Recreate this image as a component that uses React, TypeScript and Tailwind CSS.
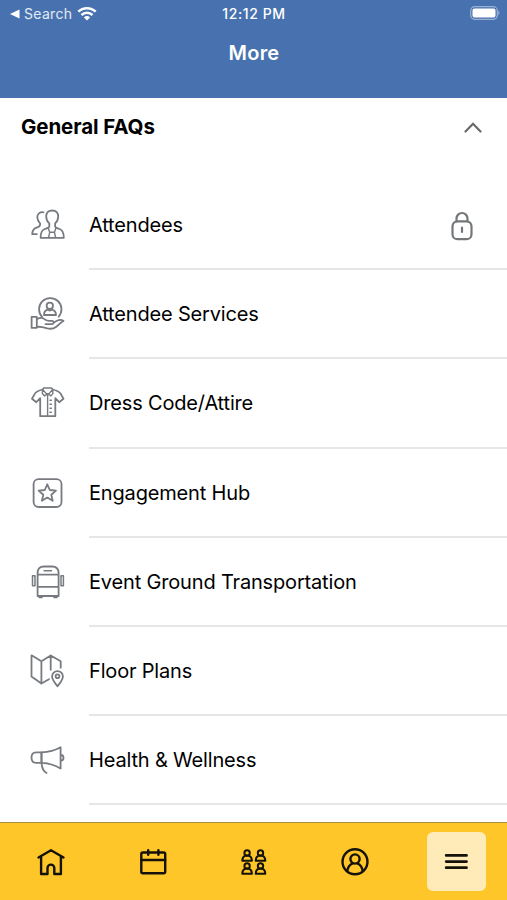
import type { ReactNode } from "react";

type IconProps = { children?: ReactNode };

const LineIcon = ({ children }: IconProps) => (
  <svg
    viewBox="0 0 34 34"
    className="-mt-px h-[34px] w-[34px] shrink-0 overflow-visible text-[#777b80]"
    fill="none"
    stroke="currentColor"
    strokeWidth="1.8"
    strokeLinecap="round"
    strokeLinejoin="round"
    aria-hidden
  >
    {children}
  </svg>
);

const AttendeesIcon = () => (
  <LineIcon>
    <path d="M13.5 4.3C9.8 3.8 7.2 6 7.3 9.2c.1 2.6 1.3 4.7 2.8 6.2.5 2.5-1 3.5-3.6 4.3-3.2 1.1-4.2 2.8-4.2 6.5h4.5" />
    <path d="M22.2 2.5c-3.9 0-6.2 2.5-6 6.2.2 3.4 1.8 5.6 3.1 6.7v3.2c-.5 1.2-2.4 1.7-4.5 2.4-3.2 1-4.2 3.2-4.2 8.8h23.2c0-5.6-1-7.8-4.2-8.8-2.1-.7-4-1.2-4.5-2.4v-3.2c1.3-1.1 2.9-3.3 3.1-6.7.2-3.7-2.1-6.2-6-6.2Z" />
    <path d="m18.3 20 1.400 4.300h4.800l1.400-4.300M19.700 24.300 18.600 29.500M24.500 24.300l1.100 5.200" strokeWidth="1.4" />
  </LineIcon>
);

const ServicesIcon = () => (
  <LineIcon>
    <path d="M12.2 20a11.2 11.2 0 1 1 16.5-.4" />
    <circle cx="19.8" cy="8.8" r="3.2" />
    <path d="M14 18c0-3 .8-4.5 3.3-5.4 1.5 1.1 3.500 1.100 5 0C25 13.500 26 15 26 18Z" />
    <path d="M1.600 19.800h5.200v11H1.600z" />
    <path d="M6.800 22.200c3.200-1.900 5.700-1.700 8 .2 1.400 1.200 3 1.500 5.200 1.400h2c2.300.1 2.300 3.200 0 3.300h-6.500M24.200 25.300l2.800-1.500c2.300-1.200 4.500-1.300 6.500.2-2.300 1-4 3.300-7.200 5.700-2.500 1.900-5.500 2.500-9 1.700l-5-1.300c-1.800-.4-3.500-.4-5.500-.3" />
  </LineIcon>
);

const AttireIcon = () => (
  <LineIcon>
    <path d="M12.600 3.500C7.500 4.800 6 5.500 4.900 7.600L2 12.700l4.300 3.500 3.900-4v18h15.100v-18l3.900 4 4.300-3.500-2.900-5.100c-1.200-2.100-2.700-2.800-7.900-4.100" />
    <path d="M12.600 3.500 13.700 2h8l1 1.500-5 5.600ZM12.600 3.500l-.3 4.100 2.200 2.300 3.200-2.200 3.200 2.200 2-2.300-.2-4.100M17.600 9v21" strokeWidth="1.4" />
    <path d="M20 14.300h1.400M20 18.300h1.400M20 22.300h1.400M20 26.200h1.400" strokeWidth="1.4" />
  </LineIcon>
);

const HubIcon = () => (
  <LineIcon>
    <rect x="3.6" y="3.1" width="27.9" height="27.9" rx="5" />
    <path d="m17.300 8.300 2.500 5.700 6.200.6-4.700 4.100 1.400 6.100-5.400-3.200-5.400 3.200 1.400-6.100-4.700-4.100 6.200-.6Z" />
  </LineIcon>
);

const BusIcon = () => (
  <LineIcon>
    <path d="M7.600 31V8.200c0-4.600 2.400-6.700 6.500-6.700h8c4.100 0 6.500 2.100 6.500 6.700V31ZM7.600 9.700h21M7.600 21.900h21" />
    <path d="M14 5.800h7.600" strokeWidth="1.4" />
    <path d="M9.300 32.200h2.600M24.200 32.200h2.600" strokeWidth="2" />
    <path d="M5 10.700H2.500v10H5ZM31 10.700h2.400v10H31Z" strokeWidth="1.5" />
  </LineIcon>
);

const FloorIcon = () => (
  <LineIcon>
    <path d="M19 25.200 11.400 29.500 1.500 22.500V1.300l9.900 5.900 9.300-5.700 10 5.700v6.500M11.400 7.200v22.300M20.700 1.500v14.300" />
    <path d="M27.500 32.300c-2.600-3.500-5.400-6.500-5.400-9.800a5.400 5.400 0 0 1 10.800 0c0 3.300-2.800 6.300-5.400 9.800Z" />
    <circle cx="27.5" cy="22.3" r="1.9" />
  </LineIcon>
);

const HealthIcon = () => (
  <LineIcon>
    <path d="M11.500 9.300H6.200c-3.200 0-4.700 1.700-4.700 5.200s1.500 5.400 4.700 5.400h5.300M11.500 9.300c7.500-.2 13-1.500 19.100-5v21.200c-6.100-3.700-11.600-5.300-19.100-5.600ZM31 12c1.700.1 2.500 1.100 2.500 2.900S32.700 17.500 31 17.600" />
    <path d="M11.500 9.300v10.600c.3 4.600 1.900 8.300 5 10.100" />
  </LineIcon>
);

const LockIcon = () => (
  <svg
    viewBox="0 0 22 30"
    className="mt-px h-[30px] w-[22px]"
    fill="none"
    stroke="#74777a"
    strokeWidth="2.2"
    strokeLinecap="round"
    aria-hidden
  >
    <rect x="1.5" y="10.3" width="19" height="17.9" rx="5" />
    <path d="M5.500 10.300V7.500a5.500 5.500 0 0 1 11 0v2.800" />
    <path d="M11 16.700v4.200" />
  </svg>
);

const NavIcon = ({ children }: IconProps) => (
  <svg
    viewBox="0 0 28 28"
    className="h-7 w-7 overflow-visible"
    fill="none"
    stroke="#15120a"
    strokeWidth="2.4"
    strokeLinecap="round"
    strokeLinejoin="round"
    aria-hidden
  >
    {children}
  </svg>
);

const Person = ({ x, y }: { x: number; y: number }) => (
  <g transform={`translate(${x} ${y})`} strokeWidth="2">
    <circle cx="5.4" cy="3.3" r="2.7" />
    <path d="M.6 11.100c0-2.900 1-4.200 2.900-5h3.800c1.900.8 2.900 2.100 2.900 5Z" />
  </g>
);

const items = [
  { label: "Attendees", icon: <AttendeesIcon />, locked: true },
  { label: "Attendee Services", icon: <ServicesIcon /> },
  { label: "Dress Code/Attire", icon: <AttireIcon /> },
  { label: "Engagement Hub", icon: <HubIcon /> },
  { label: "Event Ground Transportation", icon: <BusIcon /> },
  { label: "Floor Plans", icon: <FloorIcon /> },
  { label: "Health & Wellness", icon: <HealthIcon /> },
];

const tabs = [
  {
    name: "home",
    icon: (
      <NavIcon>
        <path d="m1.500 9.500 12.500-7.300 12.500 7.300M4.100 9v17h6.400v-6a3.400 3.400 0 0 1 6.800 0v6h6.600V9" />
      </NavIcon>
    ),
  },
  {
    name: "schedule",
    icon: (
      <NavIcon>
        <rect x="3.3" y="4.5" width="23.9" height="20.7" rx="1.5" />
        <path d="M3.300 12h23.900M10.200 2.200v4.500M20.400 2.200v4.500" />
      </NavIcon>
    ),
  },
  {
    name: "people",
    icon: (
      <NavIcon>
        <Person x={2.7} y={1.6} />
        <Person x={16.1} y={1.6} />
        <Person x={2.7} y={14.6} />
        <Person x={16.1} y={14.6} />
      </NavIcon>
    ),
  },
  {
    name: "profile",
    icon: (
      <NavIcon>
        <circle cx="14" cy="13.8" r="12.5" />
        <circle cx="14" cy="11" r="4.6" />
        <path d="M6.300 23.100c.5-4.300 2.200-6.400 5.300-7.800M16.400 15.300c3.100 1.400 4.800 3.500 5.300 7.800" />
      </NavIcon>
    ),
  },
  {
    name: "more",
    active: true,
    icon: (
      <NavIcon>
        <path d="M4.200 7.400h20.300M4.200 13.600h20.300M4.200 19.700h20.300" strokeWidth="2.8" />
      </NavIcon>
    ),
  },
];

const StatusBar = () => (
  <div className="grid h-[27px] grid-cols-3 items-center pl-2.5 pr-[7px]">
    <div className="flex items-center">
      <svg viewBox="0 0 10 10" className="h-2.5 w-2.5" fill="white" aria-hidden>
        <path d="M0 5 9.500.5v9Z" />
      </svg>
      <span className="ml-1 text-[14px] tracking-[0.3px] text-white/85">Search</span>
      <svg viewBox="0 0 20 15" className="ml-[5px] h-[15px] w-5" fill="none" stroke="white" strokeWidth="2.5" aria-hidden>
        <path d="M1.300 5.700a12.400 12.400 0 0 1 17.400 0M4.500 9a7.800 7.800 0 0 1 11 0" />
        <path d="M10 14.500 6.900 11.400a4.400 4.400 0 0 1 6.200 0Z" fill="white" stroke="none" />
      </svg>
    </div>
    <span className="-ml-0.5 text-center text-[14px] font-medium tracking-[0.6px]">12:12 PM</span>
    <svg viewBox="0 0 30 14" className="-mt-px h-3.5 w-[30px] justify-self-end" fill="white" aria-hidden>
      <rect x=".7" y=".7" width="26.6" height="12.6" rx="4" fill="none" stroke="white" strokeOpacity=".45" strokeWidth="1.2" />
      <rect x="2.5" y="2.4" width="23" height="9.2" rx="2" />
      <path d="M28.300 4.800c1.500.5 1.500 3.900 0 4.400Z" fillOpacity=".45" />
    </svg>
  </div>
);

export default function App() {
  return (
    <div className="flex h-[900px] flex-col overflow-hidden bg-white font-['Inter','Liberation_Sans',sans-serif] text-black">
      <header className="h-[98px] shrink-0 bg-[#4872af] text-white">
        <StatusBar />
        <h1 className="mt-3 pl-px text-center text-[20px] font-semibold leading-7 tracking-[0.2px]">More</h1>
      </header>

      <main className="min-h-0 flex-1 overflow-hidden">
        <div className="flex h-[83px] items-start justify-between pl-[21px] pr-[25px] pt-[15px]">
          <h2 className="text-[20.5px] font-bold leading-7 tracking-[-0.1px]">General FAQs</h2>
          <svg
            viewBox="0 0 18 11"
            className="mt-[9px] h-[11px] w-[18px]"
            fill="none"
            stroke="#68696b"
            strokeWidth="2.2"
            strokeLinecap="round"
            aria-hidden
          >
            <path d="m1.500 9.500 7.500-7.700 7.500 7.700" />
          </svg>
        </div>

        <ul>
          {items.map((item) => (
            <li key={item.label} className="flex h-[89.2px] pl-[30px]">
              <span className="flex w-[59px] items-center">{item.icon}</span>
              <span className="flex flex-1 items-center justify-between border-b-2 border-[#e6e6e7] pr-[34px] pt-px">
                <span className="text-[20px] leading-7 tracking-[-0.17px]">{item.label}</span>
                {item.locked && <LockIcon />}
              </span>
            </li>
          ))}
        </ul>
      </main>

      <nav className="grid h-[78px] shrink-0 grid-cols-5 items-center border-t border-[#a48c49] bg-[#ffc629]">
        {tabs.map((tab) => (
          <button
            key={tab.name}
            aria-label={tab.name}
            className={
              tab.active
                ? "mx-auto flex h-[59px] w-[59px] items-center justify-center rounded-md bg-[#ffebb8]"
                : "mx-auto flex h-[59px] w-[59px] items-center justify-center"
            }
          >
            {tab.icon}
          </button>
        ))}
      </nav>
    </div>
  );
}
